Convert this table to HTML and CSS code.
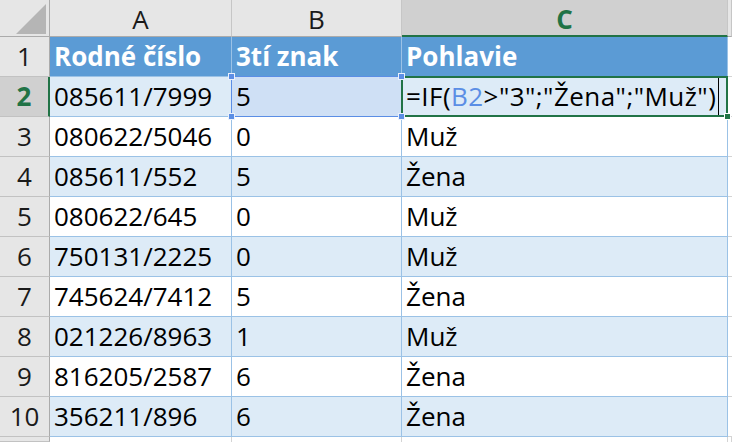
FILE: index.html
```html
<!DOCTYPE html>
<html lang="sk">
<head>
<meta charset="utf-8">
<title>Sheet</title>
<link rel="stylesheet" href="styles.css">
</head>
<body>
<div class="sheet">
  <div class="corner"><svg class="tri" width="49" height="36" viewBox="0 0 49 36"><polygon points="16,34 46,34 46,4" fill="#b5b5b5"/></svg></div>
  <div class="colh">A</div>
  <div class="colh">B</div>
  <div class="colh sel">C</div>
  <div class="colh">&nbsp;</div>

  <div class="rowh">1</div>
  <div class="c hd">Rodné číslo</div>
  <div class="c hd">3tí znak</div>
  <div class="c hd">Pohlavie</div>
  <div class="d"></div>

  <div class="rowh sel">2</div>
  <div class="c band">085611/7999</div>
  <div class="c band selB">5<span class="h tl"></span><span class="h tr"></span><span class="h bl"></span><span class="h br"></span></div>
  <div class="c band selC"><span class="f">=IF(<span class="ref">B2</span>&gt;"3";"Žena";"Muž")</span><span class="caret"></span><span class="fill"></span></div>
  <div class="d"></div>

  <div class="rowh">3</div>
  <div class="c">080622/5046</div>
  <div class="c">0</div>
  <div class="c">Muž</div>
  <div class="d"></div>

  <div class="rowh">4</div>
  <div class="c band">085611/552</div>
  <div class="c band">5</div>
  <div class="c band">Žena</div>
  <div class="d"></div>

  <div class="rowh">5</div>
  <div class="c">080622/645</div>
  <div class="c">0</div>
  <div class="c">Muž</div>
  <div class="d"></div>

  <div class="rowh">6</div>
  <div class="c band">750131/2225</div>
  <div class="c band">0</div>
  <div class="c band">Muž</div>
  <div class="d"></div>

  <div class="rowh">7</div>
  <div class="c">745624/7412</div>
  <div class="c">5</div>
  <div class="c">Žena</div>
  <div class="d"></div>

  <div class="rowh">8</div>
  <div class="c band">021226/8963</div>
  <div class="c band">1</div>
  <div class="c band">Muž</div>
  <div class="d"></div>

  <div class="rowh">9</div>
  <div class="c">816205/2587</div>
  <div class="c">6</div>
  <div class="c">Žena</div>
  <div class="d"></div>

  <div class="rowh">10</div>
  <div class="c band">356211/896</div>
  <div class="c band">6</div>
  <div class="c band">Žena</div>
  <div class="d"></div>

  <div class="rowh"></div>
  <div class="e"></div>
  <div class="e"></div>
  <div class="e"></div>
  <div class="e"></div>
</div>
</body>
</html>
```

FILE: styles.css
```css
html, body {
  margin: 0;
  padding: 0;
  background: #fff;
}

.sheet {
  display: grid;
  grid-template-columns: 50px 182px 170px 326px 4px;
  grid-template-rows: 37px repeat(10, 40px) 5px;
  width: 732px;
  height: 442px;
  overflow: hidden;
  font-family: "Open Sans", "Noto Sans", sans-serif;
  font-size: 26px;
  color: #000;
}

.sheet > div {
  box-sizing: border-box;
  white-space: nowrap;
  min-width: 0;
}

.corner {
  background: #e6e6e6;
  border-right: 1px solid #ababab;
  border-bottom: 1px solid #ababab;
}

.tri {
  display: block;
}

.colh {
  background: #e6e6e6;
  border-right: 1px solid #c6c6c6;
  border-bottom: 1px solid #ababab;
  text-align: center;
  padding-top: 2px;
  line-height: 34px;
  color: #1a1a1a;
  overflow: hidden;
}

.colh.sel {
  background: #d0d0d0;
  color: #217346;
  font-weight: bold;
  border-bottom: 2px solid #217346;
}

.rowh {
  background: #e6e6e6;
  border-right: 1px solid #ababab;
  border-bottom: 1px solid #c2c2c2;
  text-align: center;
  line-height: 39px;
  color: #1a1a1a;
  overflow: hidden;
}

.rowh.sel {
  background: #d0d0d0;
  color: #217346;
  font-weight: bold;
  border-right: 2px solid #217346;
}

.c {
  background: #fff;
  border-right: 1px solid #9bc2e6;
  border-bottom: 1px solid #9bc2e6;
  padding-left: 4px;
  line-height: 39px;
}

.c.hd {
  background: #5b9bd5;
  color: #fff;
  font-weight: bold;
}

.c.band {
  background: #ddebf7;
}

.d {
  background: #fff;
  border-bottom: 1px solid #d4d4d4;
}

.e {
  background: #fff;
  border-right: 1px solid #d4d4d4;
}

.selB {
  position: relative;
}

.c.band.selB {
  background: #cfe0f5;
}

.selB::before {
  content: "";
  position: absolute;
  top: -1px;
  left: -1px;
  right: -1px;
  bottom: -1px;
  border: 1px solid #5b8ee5;
  z-index: 2;
}

.h {
  position: absolute;
  width: 7px;
  height: 7px;
  box-sizing: border-box;
  background: #5b8ee5;
  border: 1px solid #eaf1fc;
  z-index: 4;
}

.h.tl { left: -4px; top: -4px; }
.h.tr { right: -4px; top: -4px; }
.h.bl { left: -4px; bottom: -4px; }
.h.br { right: -4px; bottom: -4px; }

.selC {
  position: relative;
}

.selC::after {
  content: "";
  position: absolute;
  top: -1px;
  left: -1px;
  right: -1px;
  bottom: -1px;
  border: 2px solid #217346;
  z-index: 3;
}

.f {
  letter-spacing: 0.45px;
}

.ref {
  color: #5b8ee5;
}

.caret {
  display: inline-block;
  width: 1px;
  height: 37px;
  margin-left: 2px;
  background: #000;
  vertical-align: -9px;
}

.fill {
  position: absolute;
  right: -4px;
  bottom: -4px;
  width: 7px;
  height: 7px;
  box-sizing: border-box;
  background: #217346;
  border: 1px solid #fff;
  z-index: 4;
}
```
